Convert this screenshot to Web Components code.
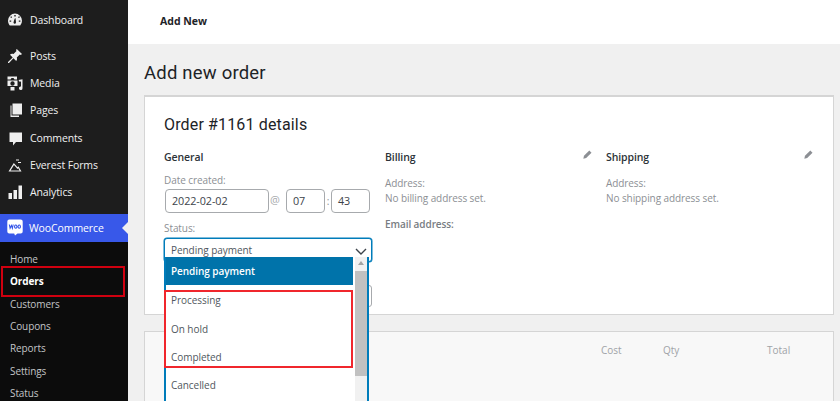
<!DOCTYPE html>
<html>
<head>
<meta charset="utf-8">
<style>
html,body{margin:0;padding:0;height:401px;overflow:hidden;background:#f0f0f0}
body{font-family:"Open Sans","Noto Sans",sans-serif;font-size:10px}
</style>
</head>
<body>
<wp-admin></wp-admin>
<script>
const icons = {
  dashboard: '<path d="M8 1.500a7.200 7.200 0 0 0-7 7.200c0 1.900.7 3.500 1.800 4.800h10.400A7 7 0 0 0 15 8.700a7.200 7.200 0 0 0-7-7.200zM4 4.200l1.100.7-.7 1.100-1.100-.7zM2.600 8.500h1.600v1.300H2.600zM7.300 3h1.400v1.500H7.300zM9 10.500a1.300 1.300 0 0 1-2.400.6c-.3-.6 1.200-4.900 1.600-5 .4.100.9 3.500.8 4.400zM12 4.200l1 .9-1 1-1-.9zM11.800 8.500h1.600v1.300h-1.600z" fill-rule="evenodd"/>',
  posts: '<path d="M9.800 1l5.200 5-1.200 1-1-.5-3 3c.5 1.500.2 2.700-.6 3.500L6.400 10.200 2 15l-1 0 0-1 4.700-4.500L3 6.700c.8-.8 2-1.100 3.500-.6l3-3L9 2z"/>',
  media: '<path d="M.5 1.500h9.500v3H7.500L6.500 3h-2l-1 1.500H.5zM.5 5.500h10v5.500H.5zM5.500 6.300a2.200 2.200 0 1 0 0 4.400 2.200 2.200 0 0 0 0-4.400zM3.500 12h4v3.500h-4zM11.500 5l4-.8v9a1.800 1.800 0 1 1-1.500-1.700V6.500l-1.500.3z" fill-rule="evenodd"/>',
  pages: '<path d="M5.500 1.500H15v11H5.500zM3.500 3.500h1v10H12v1.500H3.500z"/>',
  comments: '<path d="M2.500 2.500H15v9.500H9l-3 3.500V12H2.500z"/>',
  everest: '<path d="M1.500 14.500L6.800 6l3.700 4.200.9-.9 3.100 5.200zM3.600 13.500h8.900l-1.300-2.300-.7.700-3.500-4zM9 2.500h3v1H9zM11 5h3v1h-3z" fill-rule="evenodd"/>',
  analytics: '<path d="M1.500 9h3.500v6H1.500zM6.500 6h3.500v9H6.500zM11.500 1.500h3.500V15h-3.500z"/>'
};

class AdminIcon extends HTMLElement {
  connectedCallback() {
    const shadow = this.attachShadow({ mode: 'open' });
    shadow.innerHTML = `<style>:host{display:block;width:16px;height:16px}svg{display:block;fill:#eee}</style>
      <svg width="16" height="16" viewBox="0 0 16 16">${icons[this.getAttribute('name')] || ''}</svg>`;
  }
}
customElements.define('admin-icon', AdminIcon);

class MenuItem extends HTMLElement {
  connectedCallback() {
    const shadow = this.attachShadow({ mode: 'open' });
    shadow.innerHTML = `<style>
      :host{display:flex;align-items:center;height:27.200px;padding-left:7px;gap:7px;color:#f0f0f1;font-size:10.500px;letter-spacing:-.12px}
    </style><admin-icon name="${this.getAttribute('icon')}"></admin-icon><slot></slot>`;
  }
}
customElements.define('menu-item', MenuItem);

class SubItem extends HTMLElement {
  connectedCallback() {
    const shadow = this.attachShadow({ mode: 'open' });
    shadow.innerHTML = `<style>
      :host{display:flex;align-items:center;height:22.330px;padding-left:10px;color:#c3c4c7;font-size:10px;letter-spacing:-.1px}
      :host([current]){color:#fff;font-weight:700}
    </style><slot></slot>`;
  }
}
customElements.define('sub-item', SubItem);

class AdminSidebar extends HTMLElement {
  connectedCallback() {
    const shadow = this.attachShadow({ mode: 'open' });
    shadow.innerHTML = `<style>
      :host{display:flex;flex-direction:column;width:128px;height:401px;flex:none;background:#1d1d1d;overflow:hidden;position:relative}
      :host>*{flex:none}
      .top{height:42.500px}
      .top menu-item{height:40px}
      .woo{margin-top:8.300px;height:28px;background:#3858e9;display:flex;align-items:center;gap:6px;padding-left:7px;color:#fff;font-size:10.500px;letter-spacing:-.1px;position:relative}
      .woo svg{display:block}
      .woo::after{content:"";position:absolute;right:0;top:8px;border:6px solid transparent;border-right-color:#f0f0f0;border-left:0}
      .sub{flex:1 0 auto;background:#0c0c0c;padding-top:6px}
      .mark{position:absolute;left:1px;top:266px;width:120px;height:27px;border:2px solid #d0000f}
    </style>
    <div class="top"><menu-item icon="dashboard">Dashboard</menu-item></div>
    <div>
      <menu-item icon="posts">Posts</menu-item>
      <menu-item icon="media">Media</menu-item>
      <menu-item icon="pages">Pages</menu-item>
      <menu-item icon="comments">Comments</menu-item>
      <menu-item icon="everest">Everest Forms</menu-item>
      <menu-item icon="analytics">Analytics</menu-item>
    </div>
    <div class="woo">
      <svg width="16" height="17" viewBox="0 0 16 17"><path fill="#fff" d="M2.300.5h11.400a2 2 0 0 1 2 2v10a2 2 0 0 1-2 2H10.500l-2.500 2-.8-2H2.300a2 2 0 0 1-2-2v-10a2 2 0 0 1 2-2z"/><path fill="none" stroke="#3858e9" stroke-width="1.100" d="M2.300 5.500l.8 3.800 1.300-2.800 1 2.800.8-3.800M8.700 6a1.200 1.600 0 1 0 .1 0zM12.200 6a1.200 1.600 0 1 0 .1 0z"/></svg>
      <span>WooCommerce</span>
    </div>
    <div class="sub">
      <sub-item>Home</sub-item>
      <sub-item current>Orders</sub-item>
      <sub-item>Customers</sub-item>
      <sub-item>Coupons</sub-item>
      <sub-item>Reports</sub-item>
      <sub-item>Settings</sub-item>
      <sub-item>Status</sub-item>
    </div>
    <div class="mark"></div>`;
  }
}
customElements.define('admin-sidebar', AdminSidebar);

class StatusDropdown extends HTMLElement {
  connectedCallback() {
    const shadow = this.attachShadow({ mode: 'open' });
    shadow.innerHTML = `<style>
      :host{display:block;position:relative;width:208px;font-size:10px;color:#50575e;letter-spacing:-.05px}
      .box{box-sizing:border-box;height:24px;border:1px solid #007cba;border-radius:3px;padding:4.500px 6px;background:#fff;line-height:13px;position:relative;box-shadow:0 0 0 .5px #007cba}
      .box svg{position:absolute;right:4px;top:9px}
      .btn{box-sizing:border-box;height:22px;margin-top:23px;border:1px solid #a7aaad;border-radius:3px;background:#fff}
      .list{position:absolute;left:0;top:19px;width:205px;height:150px;box-sizing:border-box;border:solid #007cba;border-width:0 2px;background:#fff;display:flex}
      .opts{width:187px;flex:none}
      .opt{height:28px;line-height:28px;padding-left:5px}
      .opt.sel{background:#0073aa;color:#fff;font-weight:600}
      .mark{border:2px solid #f0262c;margin:5px 0 0 -2px;height:78px;box-sizing:border-box;display:flex;flex-direction:column;gap:11.500px}
      .mark div{line-height:17px;padding-left:5px}
      .opt.after{height:34px;line-height:34px}
      .bar{width:12px;background:#f1f1f1;margin-left:2px;position:relative}
      .bar i{position:absolute;left:0;right:0;top:14px;height:105px;background:#c1c1c1}
      .bar b{position:absolute;left:2.500px;top:4px;border:3.500px solid transparent;border-bottom:4px solid #a3a3a3;border-top:0}
    </style>
    <div class="box">Pending payment
      <svg width="12" height="8" viewBox="0 0 12 8"><path d="M1 1l5 5 5-5" fill="none" stroke="#3c434a" stroke-width="1.400"/></svg>
    </div>
    <div class="btn"></div>
    <div class="list">
      <div class="opts">
        <div class="opt sel">Pending payment</div>
        <div class="mark">
          <div>Processing</div>
          <div>On hold</div>
          <div>Completed</div>
        </div>
        <div class="opt after">Cancelled</div>
      </div>
      <div class="bar"><b></b><i></i></div>
    </div>`;
  }
}
customElements.define('status-dropdown', StatusDropdown);

class OrderColumn extends HTMLElement {
  connectedCallback() {
    const shadow = this.attachShadow({ mode: 'open' });
    const edit = this.hasAttribute('editable') ? `<svg class="pen" width="9" height="9" viewBox="0 0 9 9"><path fill="#8c8f94" d="M6.300.5l2.200 2.200-5.300 5.300-2.900.7.700-2.900z"/></svg>` : '';
    shadow.innerHTML = `<style>
      :host{display:block;width:221px;flex:none;position:relative;font-size:10px;color:#8c8f94;letter-spacing:-.08px}
      h3{margin:0 0 11px;font-size:10.500px;line-height:15px;font-weight:600;color:#2c3338;letter-spacing:-.1px}
      .pen{position:absolute;right:14px;top:0}
    </style><h3>${this.getAttribute('heading')}</h3>${edit}<slot></slot>`;
  }
}
customElements.define('order-column', OrderColumn);

class OrderDetails extends HTMLElement {
  connectedCallback() {
    const shadow = this.attachShadow({ mode: 'open' });
    shadow.innerHTML = `<style>
      :host{display:block;position:relative;z-index:1;box-sizing:border-box;height:220px;background:#fff;border:1px solid #d5d5d5;border-top-width:2px;padding:18px 19px 0}
      h2{margin:0 0 15px;font:400 16px/20px "Roboto","Liberation Sans",sans-serif;color:#1d2327;letter-spacing:.15px}
      .cols{display:flex}
      label{display:block;line-height:15px}
      .row{display:flex;align-items:center;margin-top:1px;margin-bottom:8px;height:24px}
      .in{box-sizing:border-box;height:24px;border:1px solid #a7aaad;border-radius:4px;color:#3c434a;padding:0 6px;line-height:22px;font-size:10.800px}
      .at{width:17px;padding-left:1px;box-sizing:border-box;color:#a7aaad;font-size:11px;margin-bottom:3px}
      .colon{width:6px;text-align:center}
      p{margin:0;line-height:15px}
      .em{margin-top:11px;font-weight:600;color:#787c82}
    </style>
    <h2>Order #1161 details</h2>
    <div class="cols">
      <order-column heading="General">
        <label style="margin-top:-3px">Date created:</label>
        <div class="row">
          <div class="in" style="width:104px;margin-left:1px">2022-02-02</div>
          <div class="at">@</div>
          <div class="in" style="width:39px">07</div>
          <div class="colon">:</div>
          <div class="in" style="width:39px">43</div>
        </div>
        <label style="margin-bottom:2px">Status:</label>
        <status-dropdown></status-dropdown>
      </order-column>
      <order-column heading="Billing" editable>
        <p>Address:</p><p>No billing address set.</p>
        <p class="em">Email address:</p>
      </order-column>
      <order-column heading="Shipping" editable>
        <p>Address:</p><p>No shipping address set.</p>
      </order-column>
    </div>`;
  }
}
customElements.define('order-details', OrderDetails);

class OrderItems extends HTMLElement {
  connectedCallback() {
    const shadow = this.attachShadow({ mode: 'open' });
    shadow.innerHTML = `<style>
      :host{display:block;box-sizing:border-box;height:100px;margin-top:16px;background:#f8f8f8;border:1px solid #d5d5d5;font-size:10px;color:#a0a3a7;position:relative}
      span{position:absolute;top:11px}
    </style><span style="left:456px">Cost</span><span style="left:518px">Qty</span><span style="left:622px">Total</span>`;
  }
}
customElements.define('order-items', OrderItems);

class AdminMain extends HTMLElement {
  connectedCallback() {
    const shadow = this.attachShadow({ mode: 'open' });
    shadow.innerHTML = `<style>
      :host{display:block;flex:1;min-width:0;background:#f0f0f0}
      .bar{box-sizing:border-box;height:44px;background:#fff;display:flex;align-items:center;padding:0 0 2px 32px;font-weight:700;font-size:10.500px;color:#1d2327}
      .wrap{padding:0 6px 0 16px}
      h1{margin:0;height:51px;font:400 18.500px/58px "Roboto","Liberation Sans",sans-serif;color:#1d2327;letter-spacing:.2px}
    </style>
    <div class="bar">Add New</div>
    <div class="wrap">
      <h1>Add new order</h1>
      <order-details></order-details>
      <order-items></order-items>
    </div>`;
  }
}
customElements.define('admin-main', AdminMain);

class WpAdmin extends HTMLElement {
  connectedCallback() {
    const shadow = this.attachShadow({ mode: 'open' });
    shadow.innerHTML = `<style>:host{display:flex;width:840px;height:401px;overflow:hidden}</style>
      <admin-sidebar></admin-sidebar><admin-main></admin-main>`;
  }
}
customElements.define('wp-admin', WpAdmin);
</script>
</body>
</html>
